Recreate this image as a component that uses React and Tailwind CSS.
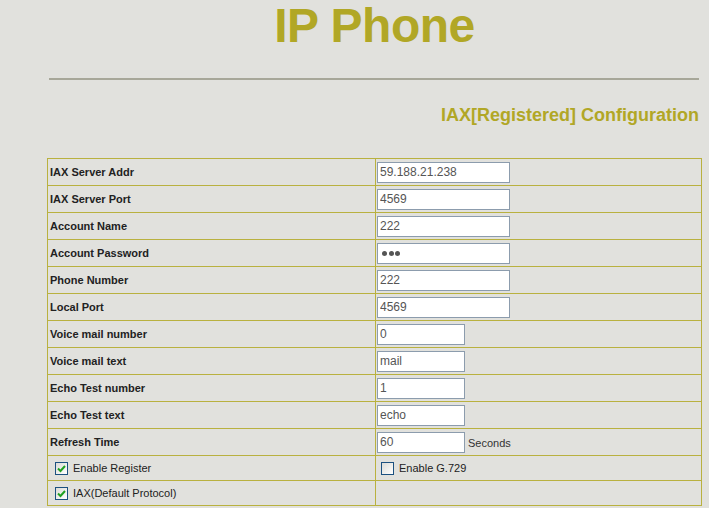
import React from "react"

const rows = [
  { label: "IAX Server Addr", value: "59.188.21.238", wide: true },
  { label: "IAX Server Port", value: "4569", wide: true },
  { label: "Account Name", value: "222", wide: true },
  { label: "Account Password", value: "", wide: true, password: true },
  { label: "Phone Number", value: "222", wide: true },
  { label: "Local Port", value: "4569", wide: true },
  { label: "Voice mail number", value: "0" },
  { label: "Voice mail text", value: "mail" },
  { label: "Echo Test number", value: "1" },
  { label: "Echo Test text", value: "echo" },
  { label: "Refresh Time", value: "60", suffix: "Seconds" },
]

const CheckBox = ({ checked }) => (
  <span className="flex h-[13px] w-[13px] shrink-0 items-center justify-center border border-[#1c5180] bg-gradient-to-br from-[#dcdcd7] to-white">
    {checked && (
      <svg width="9" height="9" viewBox="0 0 9 9">
        <path d="M1 4.5 L3.5 7 L8 2" fill="none" stroke="#21a121" strokeWidth="2" />
      </svg>
    )}
  </span>
)

const App = () => {
  return (
    <div className="min-h-[508px] bg-[#e1e1dd] font-['Liberation_Sans',Arial,sans-serif] text-[#222]">
      <div className="ml-[47px] w-[655px] pt-[2px]">
        <h1 className="text-center text-[48px] font-bold leading-[48px] tracking-[-0.5px] text-[#b1a726]">IP Phone</h1>
        <div className="ml-[2px] mr-[3px] mt-[28px] h-[2px] bg-[#a7a799]" />
        <div className="mr-[3px] mt-[24px] text-right text-[18px] font-bold leading-[22px] text-[#b1a726]">
          IAX[Registered] Configuration
        </div>

        <div className="mt-[32px] border-x border-t border-[#b9b13f]">
          {rows.map((r) => (
            <div key={r.label} className="grid grid-cols-[328px_1fr] border-b border-[#b9b13f]">
              <div className="flex h-[26px] items-center border-r border-[#b9b13f] pl-[2px] text-[11px] font-bold">
                {r.label}
              </div>
              <div className="flex h-[26px] items-center pl-px">
                {r.password ? (
                  <div className="flex h-[21px] w-[133px] items-center gap-[1.5px] border border-[#8c9cad] bg-white pl-[4px]">
                    <span className="h-[5px] w-[5px] rounded-full bg-[#555]" />
                    <span className="h-[5px] w-[5px] rounded-full bg-[#555]" />
                    <span className="h-[5px] w-[5px] rounded-full bg-[#555]" />
                  </div>
                ) : (
                  <input
                    type="text"
                    readOnly
                    defaultValue={r.value}
                    className={`h-[21px] border border-[#8c9cad] bg-white px-[2px] font-['Liberation_Sans',Arial,sans-serif] text-[12px] text-[#555] outline-none ${
                      r.wide ? "w-[133px]" : "w-[88px]"
                    }`}
                  />
                )}
                {r.suffix && <span className="ml-[3px] mt-[3px] text-[11px] text-[#333]">{r.suffix}</span>}
              </div>
            </div>
          ))}

          <div className="grid grid-cols-[328px_1fr] border-b border-[#b9b13f]">
            <div className="flex h-[24px] items-center gap-[5px] border-r border-[#b9b13f] pl-[7px] text-[11px]">
              <CheckBox checked />
              <span>Enable Register</span>
            </div>
            <div className="flex h-[24px] items-center gap-[5px] pl-[5px] text-[11px]">
              <CheckBox />
              <span>Enable G.729</span>
            </div>
          </div>

          <div className="grid grid-cols-[328px_1fr] border-b border-[#b9b13f]">
            <div className="flex h-[24px] items-center gap-[5px] border-r border-[#b9b13f] pl-[7px] text-[11px]">
              <CheckBox checked />
              <span>IAX(Default Protocol)</span>
            </div>
            <div className="h-[24px]" />
          </div>
        </div>
      </div>
    </div>
  )
}

export default App
